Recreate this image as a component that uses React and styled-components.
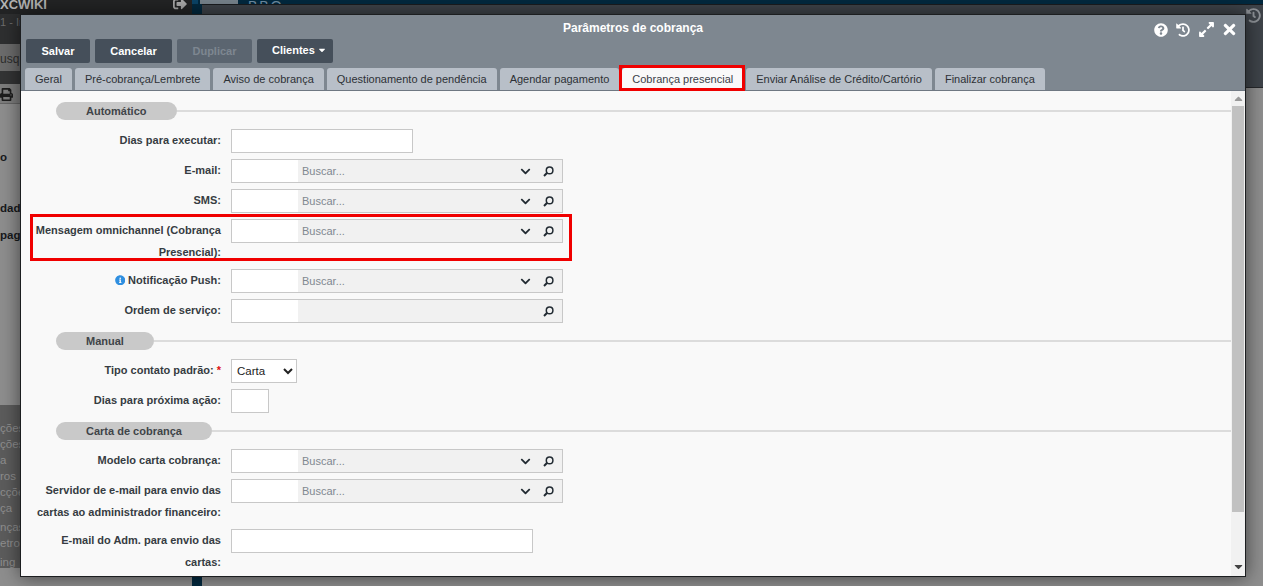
import React from "react";
import styled, { createGlobalStyle } from "styled-components";
import { FaQuestionCircle, FaHistory, FaExpandAlt, FaTimes, FaChevronDown, FaInfoCircle, FaPrint, FaSignOutAlt, FaCaretDown, FaCaretUp } from "react-icons/fa";

const Global = createGlobalStyle`
  html, body { margin: 0; padding: 0; height: 100%; overflow: hidden; }
  body { font-family: "Liberation Sans", Arial, sans-serif; background: #8c8c8c; }
  * { box-sizing: border-box; }
`;

const Page = styled.div`
  position: relative;
  display: flex;
  width: 1263px;
  height: 586px;
  overflow: hidden;
`;

const Sidebar = styled.aside`
  width: 192px;
  flex: none;
  display: flex;
  flex-direction: column;
  background: #8e8e8e;
`;

const SideBrand = styled.div`
  height: 14px;
  background: #232425;
  display: flex;
  align-items: flex-start;
  justify-content: space-between;
  padding-right: 5px;
  padding-left: 0;
  color: #b4b4b4;
  font-weight: 700;
  font-size: 13px;
  line-height: 9px;
  overflow: hidden;
  flex: none;
  svg { color: #aaa; margin-top: -3px; }
`;

const SideUser = styled.div`
  height: 30px;
  background: #2e2f30;
  color: #6c6c6c;
  font-size: 11px;
  line-height: 16px;
  flex: none;
`;

const SideSearch = styled.div`
  height: 27px;
  background: #6c6c6c;
  color: #2c2c2c;
  font-size: 12px;
  line-height: 30px;
  flex: none;
`;

const SideDark = styled.div`
  height: 13px;
  background: #333435;
  flex: none;
`;

const SidePrint = styled.div`
  height: 20px;
  background: #7d7d7d;
  border-bottom: 1px solid #666;
  color: #1d1d1d;
  font-size: 13px;
  flex: none;
  padding-top: 4px;
  line-height: 0;
`;

const SideBold = styled.div`
  color: #17191c;
  font-size: 11.5px;
  font-weight: 700;
  line-height: 14px;
  height: 14px;
  margin-top: ${(p) => p.$top}px;
  flex: none;
`;

const SideMenu = styled.ul`
  list-style: none;
  margin: 163px 0 0;
  padding: 15px 0 0;
  height: 163px;
  background: #5c5c5c;
  flex: none;
`;

const SideMenuItem = styled.li`
  color: #8f8f8f;
  font-size: 11.5px;
  line-height: 16px;
  height: 16px;
  margin-bottom: ${(p) => p.$gap || 0}px;
`;

const Main = styled.main`
  flex: 1;
  background: #02293f;
  display: flex;
  flex-direction: column;
`;

const MainTop = styled.div`
  height: 4px;
  flex: none;
  overflow: hidden;
  display: flex;
  padding-left: 8px;
  background: linear-gradient(90deg, #0a4468 0 6px, #02293f 6px);
`;

const TopBlock = styled.div`
  width: 38px;
  flex: none;
  background: #77838c;
`;

const TopName = styled.div`
  margin-left: 10px;
  color: #6f8da3;
  font-size: 14px;
  line-height: 12px;
  letter-spacing: 2px;
  white-space: nowrap;
`;

const BehindWrap = styled.div`
  flex: 1;
  display: flex;
  padding-left: 10px;
`;

const BehindWindow = styled.div`
  flex: 1;
  display: flex;
  flex-direction: column;
  background: #8e8e8e;
`;

const BehindHeader = styled.div`
  height: 84px;
  background: #3e4349;
  border-top: 1px solid #1a1c1f;
  border-bottom: 1px solid #26282b;
  display: flex;
  justify-content: flex-end;
  padding: 3px 2px 0 0;
  color: #8d9196;
  font-size: 15px;
`;

const Dialog = styled.section`
  position: absolute;
  left: 20px;
  top: 14px;
  width: 1226px;
  height: 563px;
  border: 1px solid #1c1e20;
  background: #f9f9f9;
  box-shadow: 0 0 18px rgba(0, 0, 0, 0.55);
  display: flex;
  flex-direction: column;
  overflow: hidden;
`;

const DialogHead = styled.header`
  background: #7e8790;
  height: 76px;
  flex: none;
  display: flex;
  flex-direction: column;
`;

const TitleBar = styled.div`
  position: relative;
  height: 24px;
  flex: none;
  display: flex;
  align-items: center;
  justify-content: center;
  padding-top: 2px;
  color: #fff;
  font-size: 12px;
  font-weight: 700;
`;

const TitleIcons = styled.div`
  position: absolute;
  right: 7px;
  top: 6px;
  display: flex;
  gap: 8px;
  align-items: center;
  color: #fff;
  svg { display: block; }
  svg:last-child { margin-left: -2px; }
`;

const Toolbar = styled.div`
  display: flex;
  gap: 5px;
  padding-left: 5px;
  height: 24px;
  flex: none;
`;

const ToolButton = styled.button`
  height: 24px;
  width: ${(p) => p.$w}px;
  padding: 0 0 ${(p) => (p.$pad ? 2 : 0)}px ${(p) => p.$pad || 0}px;
  border: 0;
  border-radius: 2px;
  background: ${(p) => (p.disabled ? "#5b6570" : "#454f5a")};
  color: ${(p) => (p.disabled ? "#7e8791" : "#fff")};
  font: 700 11px "Liberation Sans", Arial, sans-serif;
  display: inline-flex;
  align-items: center;
  justify-content: ${(p) => (p.$pad ? "flex-start" : "center")};
  svg { font-size: 10px; margin-left: 2px; }
`;

const Tabs = styled.nav`
  display: flex;
  gap: 3px;
  margin-top: 5px;
  padding-left: 4px;
  height: 23px;
  flex: none;
  border-bottom: 1px solid #6f7882;
`;

const Tab = styled.div`
  position: relative;
  padding: 0 10px;
  height: 22px;
  line-height: 23px;
  font-size: 11px;
  color: ${(p) => (p.$active ? "#3a4048" : "#2d3136")};
  background: ${(p) => (p.$active ? "#f9f9f9" : "#b8bfc8")};
  border-radius: 3px 3px 0 0;
  white-space: nowrap;
`;

const TabMark = styled.span`
  position: absolute;
  left: -3px;
  right: -2px;
  top: -3px;
  bottom: -1px;
  border: 3px solid #f00000;
`;

const DialogBody = styled.div`
  flex: 1;
  min-height: 0;
  display: flex;
`;

const FormArea = styled.form`
  flex: 1;
  min-width: 0;
  padding-top: 11px;
  overflow: hidden;
`;

const Section = styled.div`
  display: flex;
  align-items: center;
  padding-left: 35px;
  margin: ${(p) => (p.$first ? "0 0 9px" : "9px 0 9px")};
`;

const Pill = styled.div`
  height: 18px;
  line-height: 18px;
  padding: 0 30px;
  border-radius: 9px;
  background: #c9c9c9;
  color: #3f4448;
  font-size: 11px;
  font-weight: 700;
  white-space: nowrap;
`;

const SectionLine = styled.div`
  flex: 1;
  height: 2px;
  background: #dcdcdc;
`;

const Row = styled.div`
  position: relative;
  display: flex;
  margin-bottom: 6px;
`;

const Label = styled.label`
  width: 200px;
  flex: none;
  padding-left: 10px;
  text-align: right;
  font-size: 11px;
  font-weight: 700;
  line-height: 22px;
  color: #363c42;
  svg { color: #2f8fe0; font-size: 10.5px; vertical-align: -1px; margin-right: 3px; }
`;

const Star = styled.span`
  color: #e01010;
`;

const Field = styled.div`
  margin-left: 10px;
  flex: none;
`;

const TextInput = styled.input`
  display: block;
  width: ${(p) => p.$w}px;
  height: 24px;
  border: 1px solid #c8c8c8;
  background: #fff;
  padding: 0 4px;
  outline: none;
`;

const Select = styled.select`
  display: block;
  width: 66px;
  height: 24px;
  border: 1px solid #c8c8c8;
  background: #fff;
  color: #222;
  font: 400 11.5px "Liberation Sans", Arial, sans-serif;
  padding-left: 1px;
  border-radius: 0;
`;

const Lookup = styled.div`
  display: flex;
  width: 332px;
  height: 24px;
  border: 1px solid #c8c8c8;
  background: #f1f1f1;
`;

const LookupCode = styled.input`
  width: 66px;
  flex: none;
  border: 0;
  background: #fff;
  outline: none;
  padding: 0 4px;
`;

const LookupText = styled.div`
  flex: 1;
  padding-left: 4px;
  font-size: 11px;
  line-height: 22px;
  color: #808890;
`;

const LookupIcon = styled.span`
  width: ${(p) => p.$w}px;
  flex: none;
  display: flex;
  align-items: center;
  justify-content: center;
  color: #222b33;
  font-size: 11px;
`;

const RowMark = styled.div`
  position: absolute;
  left: 9px;
  top: -5px;
  width: 542px;
  height: 47px;
  border: 3px solid #f00000;
  pointer-events: none;
`;

const Scrollbar = styled.div`
  width: 14px;
  flex: none;
  background: #f1f1f1;
  display: flex;
  flex-direction: column;
  align-items: center;
  font-size: 13px;
  padding: 1px 0 3px;
  color: #444;
  svg { display: block; flex: none; }
  svg:first-child { color: #999; }
`;

const ScrollSlot = styled.div`
  flex: 1;
  width: 12px;
  padding-top: 1px;
`;

const Thumb = styled.div`
  width: 12px;
  height: 406px;
  background: #c1c1c1;
`;

const Lens = () => (
  <svg width="11" height="11" viewBox="0 0 11 11" fill="none" stroke="currentColor">
    <circle cx="6.6" cy="4.4" r="3.3" strokeWidth="1.5" />
    <path d="M4.2 6.8 1 10" strokeWidth="2" />
  </svg>
);

const searchBlock = (chevron, placeholder) => (
  <Lookup>
    <LookupCode />
    <LookupText>{placeholder ? "Buscar..." : ""}</LookupText>
    {chevron && (
      <LookupIcon $w={20}>
        <FaChevronDown />
      </LookupIcon>
    )}
    <LookupIcon $w={27}>
      <Lens />
    </LookupIcon>
  </Lookup>
);

const tabs = [
  "Geral",
  "Pré-cobrança/Lembrete",
  "Aviso de cobrança",
  "Questionamento de pendência",
  "Agendar pagamento",
  "Cobrança presencial",
  "Enviar Análise de Crédito/Cartório",
  "Finalizar cobrança",
];

const menuItems = [
  ["ções", 0],
  ["ções", 0],
  ["a", 0],
  ["ros", 0],
  ["cçõe", 0],
  ["ça", 3],
  ["nças", 0],
  ["etros", 3],
  ["ing", 0],
];

export default function App() {
  return (
    <Page>
      <Global />
      <Sidebar>
        <SideBrand>
          <span>XCWIKI</span>
          <FaSignOutAlt size={14} />
        </SideBrand>
        <SideUser>1 - Inl</SideUser>
        <SideSearch>usq</SideSearch>
        <SideDark />
        <SidePrint>
          <FaPrint />
        </SidePrint>
        <SideBold $top={46}>o</SideBold>
        <SideBold $top={37}>dade</SideBold>
        <SideBold $top={13}>paga</SideBold>
        <SideMenu>
          {menuItems.map(([m, gap], i) => (
            <SideMenuItem key={i} $gap={gap}>{m}</SideMenuItem>
          ))}
        </SideMenu>
      </Sidebar>
      <Main>
        <MainTop>
          <TopBlock />
          <TopName>BBO —</TopName>
        </MainTop>
        <BehindWrap>
          <BehindWindow>
            <BehindHeader>
              <FaHistory />
            </BehindHeader>
          </BehindWindow>
        </BehindWrap>
      </Main>
      <Dialog>
        <DialogHead>
          <TitleBar>
            Parâmetros de cobrança
            <TitleIcons>
              <FaQuestionCircle size={14} />
              <FaHistory size={14} />
              <FaExpandAlt size={17} />
              <FaTimes size={17} />
            </TitleIcons>
          </TitleBar>
          <Toolbar>
            <ToolButton $w={64}>Salvar</ToolButton>
            <ToolButton $w={77}>Cancelar</ToolButton>
            <ToolButton $w={75} disabled>Duplicar</ToolButton>
            <ToolButton $w={76} $pad={15}>
              Clientes <FaCaretDown />
            </ToolButton>
          </Toolbar>
          <Tabs>
            {tabs.map((t, i) => (
              <Tab key={t} $active={i === 5}>
                {t}
                {i === 5 && <TabMark />}
              </Tab>
            ))}
          </Tabs>
        </DialogHead>
        <DialogBody>
          <FormArea>
            <Section $first>
              <Pill>Automático</Pill>
              <SectionLine />
            </Section>
            <Row>
              <Label>Dias para executar:</Label>
              <Field><TextInput $w={182} /></Field>
            </Row>
            <Row>
              <Label>E-mail:</Label>
              <Field>{searchBlock(true, true)}</Field>
            </Row>
            <Row>
              <Label>SMS:</Label>
              <Field>{searchBlock(true, true)}</Field>
            </Row>
            <Row>
              <RowMark />
              <Label>Mensagem omnichannel (Cobrança Presencial):</Label>
              <Field>{searchBlock(true, true)}</Field>
            </Row>
            <Row>
              <Label><FaInfoCircle />Notificação Push:</Label>
              <Field>{searchBlock(true, true)}</Field>
            </Row>
            <Row>
              <Label>Ordem de serviço:</Label>
              <Field>{searchBlock(false, false)}</Field>
            </Row>
            <Section>
              <Pill>Manual</Pill>
              <SectionLine />
            </Section>
            <Row>
              <Label>Tipo contato padrão: <Star>*</Star></Label>
              <Field>
                <Select defaultValue="Carta">
                  <option>Carta</option>
                </Select>
              </Field>
            </Row>
            <Row>
              <Label>Dias para próxima ação:</Label>
              <Field><TextInput $w={38} /></Field>
            </Row>
            <Section>
              <Pill>Carta de cobrança</Pill>
              <SectionLine />
            </Section>
            <Row>
              <Label>Modelo carta cobrança:</Label>
              <Field>{searchBlock(true, true)}</Field>
            </Row>
            <Row>
              <Label>Servidor de e-mail para envio das cartas ao administrador financeiro:</Label>
              <Field>{searchBlock(true, true)}</Field>
            </Row>
            <Row>
              <Label>E-mail do Adm. para envio das cartas:</Label>
              <Field><TextInput $w={302} /></Field>
            </Row>
          </FormArea>
          <Scrollbar>
            <FaCaretUp />
            <ScrollSlot><Thumb /></ScrollSlot>
            <FaCaretDown />
          </Scrollbar>
        </DialogBody>
      </Dialog>
    </Page>
  );
}
